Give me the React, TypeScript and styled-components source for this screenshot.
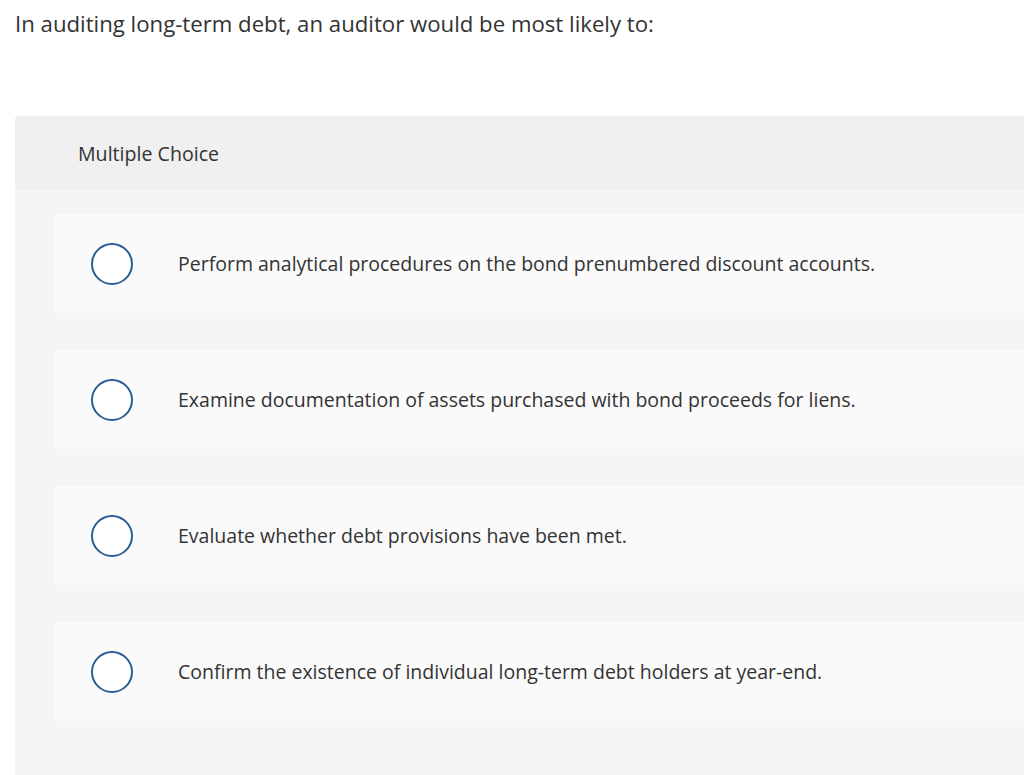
import React from 'react';
import styled, { createGlobalStyle } from 'styled-components';

const GlobalStyle = createGlobalStyle`
  html, body {
    margin: 0;
    padding: 0;
    background: #ffffff;
    overflow: hidden;
  }
  body {
    font-family: 'Open Sans', 'Liberation Sans', sans-serif;
    color: #333333;
  }
`;

const choices = [
  'Perform analytical procedures on the bond prenumbered discount accounts.',
  'Examine documentation of assets purchased with bond proceeds for liens.',
  'Evaluate whether debt provisions have been met.',
  'Confirm the existence of individual long-term debt holders at year-end.',
];

const App = () => {
  return (
    <>
      <GlobalStyle />
      <Page>
        <Question>In auditing long-term debt, an auditor would be most likely to:</Question>
        <Panel>
          <PanelHeader>Multiple Choice</PanelHeader>
          <ChoiceList>
            {choices.map((text) => (
              <Choice key={text}>
                <Radio />
                <ChoiceText>{text}</ChoiceText>
              </Choice>
            ))}
          </ChoiceList>
        </Panel>
      </Page>
    </>
  );
};

export default App;

const Page = styled.div`
  width: 1024px;
  height: 775px;
  overflow: hidden;
`;

const Question = styled.div`
  padding: 10px 0 0 15px;
  height: 116px;
  box-sizing: border-box;
  font-size: 22.2px;
  line-height: 28px;
  color: #333333;
`;

const Panel = styled.div`
  margin-left: 15px;
  border-top-left-radius: 4px;
  background: #f5f5f5;
  min-height: 700px;
`;

const PanelHeader = styled.div`
  height: 74px;
  display: flex;
  align-items: center;
  padding-left: 63px;
  background: #f0f0f0;
  border-top-left-radius: 4px;
  font-size: 19.6px;
  color: #333333;
`;

const ChoiceList = styled.div`
  display: flex;
  flex-direction: column;
  gap: 37px;
  padding: 24px 0 0 39px;
`;

const Choice = styled.div`
  height: 99px;
  display: flex;
  align-items: center;
  padding-left: 37px;
  background: #fafafa;
  border-radius: 4px 0 0 4px;
`;

const Radio = styled.span`
  width: 42px;
  height: 42px;
  flex: none;
  box-sizing: border-box;
  border: 2px solid #2b5e95;
  border-radius: 50%;
  background: #ffffff;
`;

const ChoiceText = styled.span`
  margin-left: 45px;
  font-size: 19.5px;
  color: #333333;
`;
